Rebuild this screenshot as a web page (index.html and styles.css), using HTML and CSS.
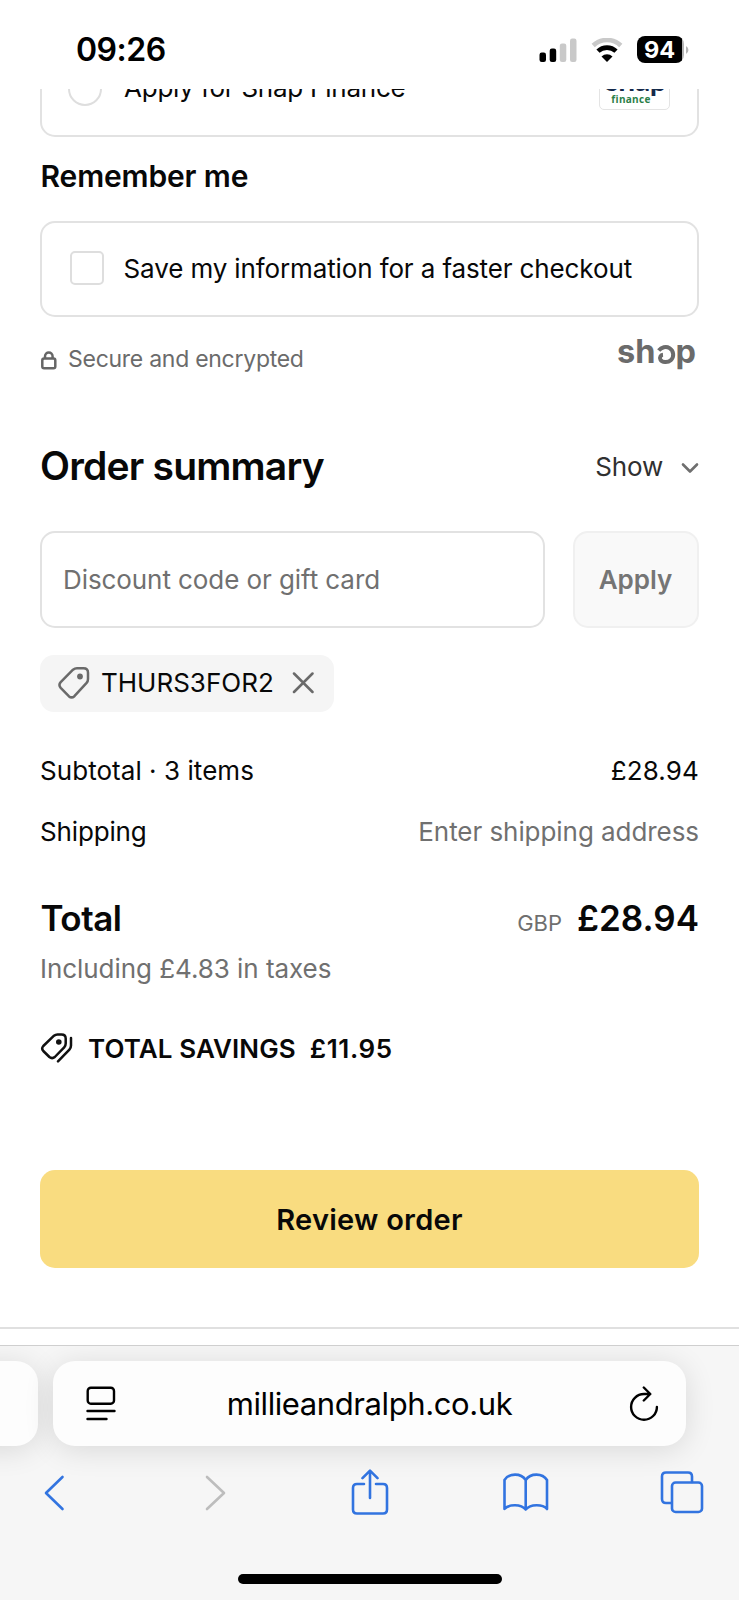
FILE: index.html
```html
<!DOCTYPE html>
<html lang="en">
<head>
<meta charset="utf-8">
<title>Checkout</title>
<link rel="stylesheet" href="styles.css">
</head>
<body>
<div class="phone">
  <header class="status">
    <span class="time">09:26</span>
    <div class="status-icons">
      <svg class="signal" width="38" height="24" viewBox="0 0 38 24"><rect x="0.500" y="14.500" width="6.500" height="9.500" rx="2.200"/><rect x="10.700" y="10.500" width="6.500" height="13.500" rx="2.200"/><rect x="20.800" y="5.500" width="6.500" height="18.500" rx="2.200" fill="#c9c9c9"/><rect x="31" y="0.500" width="6.500" height="23.500" rx="2.200" fill="#c9c9c9"/></svg>
      <svg class="wifi" width="32" height="24" viewBox="0 0 32 24" fill="none"><path d="M2.200 7.500a20 20 0 0 1 27.600 0" stroke="#c9c9c9" stroke-width="4.600"/><path d="M7 13.200a13 13 0 0 1 18 0" stroke="#000" stroke-width="4.600"/><path d="M16 24l-5.500-5.500a8 8 0 0 1 11 0z" fill="#000"/></svg>
      <div class="battery"><span class="level">94</span><svg width="5" height="8" viewBox="0 0 5 8"><path d="M1 0a4.500 4.500 0 0 1 0 8z" fill="#b5b5b5"/></svg></div>
    </div>
  </header>

  <main class="page">
    <div class="clip">
      <div class="panel snap-row">
        <span class="radio"></span>
        <span class="t snap-text">Apply for Snap Finance</span>
        <div class="snap-logo"><span class="snap-word">snap</span><span class="snap-sub">finance</span></div>
      </div>
    </div>

    <h2 class="remember"><span class="t">Remember me</span></h2>
    <label class="panel save-row"><span class="check"></span><span class="t save-text">Save my information for a faster checkout</span></label>
    <div class="secure">
      <svg width="17" height="19" viewBox="0 0 17 19" fill="none" stroke="#666" stroke-width="2.500"><rect x="2.300" y="7.600" width="13" height="9.600" rx="1.800"/><path d="M5 7.600V5.400a3.800 3.800 0 0 1 7.600 0v2.200"/></svg>
      <span class="t secure-text">Secure and encrypted</span>
      <span class="shop" aria-label="shop"><span>sh</span><svg width="19" height="21" viewBox="0 0 20 22" fill="none" stroke="#6b6b6b" stroke-width="4.200"><path d="M1.800 6.900C4.600 3.400 9.500 2 13.200 4.300c4.600 2.800 5.100 9.300 1.300 12.700-3.200 2.900-9.300 2.500-10.900-.7-1.100-2.400.2-4.800 2.700-5"/></svg><span>p</span></span>
    </div>

    <div class="summary-head">
      <h1 class="summary-title"><span class="t">Order summary</span></h1>
      <span class="t show">Show</span>
      <svg width="18" height="12" viewBox="0 0 18 12" fill="none" stroke="#6f6f6f" stroke-width="2.600" stroke-linecap="round" stroke-linejoin="round"><path d="M2 2.500l7 7 7-7"/></svg>
    </div>

    <div class="discount">
      <div class="field"><span class="t field-text">Discount code or gift card</span></div>
      <div class="apply"><span class="t">Apply</span></div>
    </div>

    <div class="chip">
      <svg class="tag" width="32" height="32" viewBox="0 0 32 32" fill="none" stroke="#6a6a6a" stroke-width="2.500" stroke-linejoin="round"><path d="M15 2.700Q16.800 1.300 19 1.300H25.500Q30 1.300 30 5.800V12Q30 14.300 28.600 15.900L16.400 29.200Q13.600 31.600 10.800 29.200L2.700 20.900Q0.200 18 2.700 15.200Z"/><circle cx="22" cy="9.500" r="2.900" fill="#6a6a6a" stroke="none"/></svg>
      <span class="t code">THURS3FOR2</span>
      <svg class="close" width="22" height="22" viewBox="0 0 22 22" fill="none" stroke="#6a6a6a" stroke-width="2.500" stroke-linecap="round"><path d="M2 1.500l18.500 18.500M20.500 1.500l-18.500 18.500"/></svg>
    </div>

    <div class="line subtotal"><span class="t l1">Subtotal · 3 items</span><span class="t l2">£28.94</span></div>
    <div class="line shipping"><span class="t l3">Shipping</span><span class="t l4">Enter shipping address</span></div>
    <div class="total"><span class="t total-label">Total</span><span class="t gbp">GBP</span><span class="t total-value">£28.94</span></div>
    <div class="taxes"><span class="t">Including £4.83 in taxes</span></div>
    <div class="savings">
      <svg width="33" height="30" viewBox="0 0 33 30" fill="none" stroke="#111" stroke-width="2.500" stroke-linecap="round" stroke-linejoin="round"><path d="M14 2.700Q15.500 1.400 17.500 1.400H21.500Q25.700 1.400 25.700 5.500V10.500Q25.700 12.700 24.200 14.300L14.800 24Q12.100 26.300 9.400 24L3.300 18Q1.100 15.500 3.300 13Z"/><circle cx="18.800" cy="9" r="2.800" fill="#111" stroke="none"/><path d="M31 5V12.500Q31 15 29.400 16.700L18 28.300"/></svg>
      <span class="t sav1">TOTAL SAVINGS</span><span class="t sav2">£11.95</span>
    </div>
    <div class="review"><span class="t">Review order</span></div>
    <div class="rule"></div>
  </main>

  <footer class="browser">
    <div class="tabs">
      <div class="prev-tab"></div>
      <div class="url">
        <svg width="30" height="36" viewBox="0 0 30 36" fill="none" stroke="#000" stroke-width="2.400" stroke-linecap="round"><rect x="1.700" y="1.700" width="26.300" height="16" rx="3.200"/><path d="M1.500 25h27M1.500 33h19"/></svg>
        <span class="t url-text">millieandralph.co.uk</span>
        <svg width="30" height="36" viewBox="0 0 30 36" fill="none" stroke="#000" stroke-width="2.400" stroke-linecap="round" stroke-linejoin="round"><path d="M20.500 8H15A12.900 12.900 0 1 0 27.900 20.900M14.800 1.500l6.500 6.500-6.500 6.500"/></svg>
      </div>
    </div>
    <nav class="tools">
      <svg class="back" width="22" height="36" viewBox="0 0 22 36"><path d="M18.500 2L2 18l16.500 16"/></svg>
      <svg class="fwd" width="22" height="36" viewBox="0 0 22 36"><path d="M2 2l17 16-17 16"/></svg>
      <svg class="share" width="38" height="47" viewBox="0 0 38 47"><path d="M13 15H6Q2 15 2 19V40.500Q2 44.500 6 44.500H32Q36 44.500 36 40.500V19Q36 15 32 15H25M19 29V2M11.500 9.200L19 1.700l7.500 7.500"/></svg>
      <svg class="book" width="46" height="39" viewBox="0 0 46 39"><path d="M22.700 7C18-.2 6-.2 1.500 7V36C6 31 18 31 22.700 36.500C27.500 31 39.500 31 44 36V7C39.500-.2 27.500-.2 22.700 7ZM22.700 7V36.500"/></svg>
      <svg class="pages" width="44" height="43" viewBox="0 0 44 43"><path d="M11 32H6Q2 32 2 28V5.500Q2 1.500 6 1.500H28Q32 1.500 32 5.500V11"/><rect x="12" y="11.500" width="30" height="29.500" rx="3.600"/></svg>
    </nav>
    <div class="home"></div>
  </footer>
</div>
</body>
</html>
```
FILE: styles.css
```css
* { box-sizing: border-box; margin: 0; }
body { background: #fff; font-family: Inter, "Liberation Sans", sans-serif; color: #080808; }
svg { flex: none; display: block; }
h1, h2 { font-weight: 600; }
.phone { width: 739px; height: 1600px; display: flex; flex-direction: column; overflow: hidden; }
.t, .time { white-space: nowrap; }

.status { height: 89px; flex: none; padding: 10px 50px 0 76px; display: flex; align-items: center; justify-content: space-between; color: #000; }
.time { font-size: 32px; font-weight: 600; letter-spacing: -0.5px; }
.status-icons { display: flex; align-items: center; }
.wifi { margin-left: 14px; }
.battery { margin-left: 14px; display: flex; align-items: center; }
.level { width: 47px; height: 27px; border-radius: 8px; background: linear-gradient(90deg, #000 45px, #b5b5b5 45px); color: #fff; font-size: 23.500px; font-weight: 700; line-height: 27px; text-align: center; padding-right: 2px; }
.battery svg { margin-left: 1px; margin-right: -1px; }

.page { height: 1256px; flex: none; padding: 0 40px; display: flex; flex-direction: column; }
.clip { height: 48px; flex: none; overflow: hidden; }
.panel { border: 2px solid #e2e2e2; border-radius: 15px; display: flex; align-items: center; font-size: 26px; }
.snap-row { margin-top: -52px; height: 100px; padding: 0 26px; }
.snap-text { letter-spacing: -0.23px; }
.radio { width: 34px; height: 34px; border: 2px solid #dedede; border-radius: 50%; margin: 3px 22px 0 0; }
.snap-logo { margin: 0 1px 0 auto; width: 71px; height: 46px; border: 1.500px solid #e4e4e4; border-radius: 5px; display: flex; flex-direction: column; align-items: center; }
.snap-word { font: 700 30px/26px Lato, sans-serif; color: #14294b; letter-spacing: -0.3px; margin: 1px 0 0 3px; }
.snap-sub { font: 700 10px/10px "Open Sans", sans-serif; color: #2b8049; letter-spacing: 0.3px; margin: 2px 7px 0 0; }

.remember { height: 78px; font-size: 30px; letter-spacing: -0.15px; line-height: 78px; padding-left: 0.500px; }
.save-row { height: 96px; margin-top: 6px; padding: 0 28px 2px; flex: none; }
.save-text { letter-spacing: -0.12px; }
.check { width: 34px; height: 34px; border: 2px solid #dedede; border-radius: 5px; margin-right: 19.500px; }
.secure { height: 84px; display: flex; align-items: center; color: #6b6b6b; font-size: 23px; }
.secure svg:first-child { margin-top: 3px; }
.secure-text { margin-left: 11px; letter-spacing: -0.27px; }
.shop { margin: -15px 3px 0 auto; display: flex; align-items: flex-end; font: 700 32.500px/40px Inter, sans-serif; color: #6b6b6b; }
.shop svg { margin: 0 0 6.500px 1px; }

.summary-head { height: 130px; display: flex; align-items: center; flex: none; }
.summary-title { font-size: 39px; flex: 1; letter-spacing: -0.8px; padding-bottom: 1px; }
.show { font-size: 26px; color: #303030; margin-right: 18px; letter-spacing: -0.2px; }
.summary-head svg { margin-top: 4px; }
.discount { display: flex; gap: 28px; height: 97px; flex: none; }
.field { width: 505px; border: 2px solid #e2e2e2; border-radius: 15px; display: flex; align-items: center; padding-left: 21px; font-size: 26px; letter-spacing: -0.08px; color: #707070; }
.apply { width: 126px; border: 2px solid #f0f0f0; border-radius: 15px; background: #f9f9f9; display: flex; align-items: center; justify-content: center; font-size: 26px; font-weight: 600; color: #757575; padding-right: 1px; }
.chip { width: 294px; height: 57px; flex: none; margin-top: 27px; border-radius: 14px; background: #f5f5f5; display: flex; align-items: center; padding: 0 0 1px 18px; font-size: 26px; }
.code { margin-left: 11px; flex: 1; padding-bottom: 1px; }
.close { margin-right: 20px; }
.line { display: flex; justify-content: space-between; align-items: center; height: 61px; flex: none; font-size: 26px; padding-bottom: 1px; }
.subtotal { margin-top: 28px; }
.l1 { letter-spacing: 0.05px; }
.l2 { letter-spacing: 0.15px; }
.l3 { letter-spacing: -0.15px; }
.l4 { color: #707070; letter-spacing: -0.06px; }
.total { height: 56px; margin-top: 28px; display: flex; align-items: baseline; line-height: 56px; font-size: 35px; font-weight: 600; flex: none; }
.total-label { letter-spacing: -0.5px; padding-left: 0.500px; }
.gbp { margin-left: auto; font-size: 22px; font-weight: 400; color: #6f6f6f; margin-right: 15px; }
.taxes { height: 46px; line-height: 46px; font-size: 26px; letter-spacing: -0.05px; color: #707070; flex: none; }
.savings { height: 60px; margin-top: 26px; display: flex; align-items: center; font-size: 26px; font-weight: 600; flex: none; }
.sav1 { margin-left: 15px; letter-spacing: 0.1px; }
.sav2 { margin-left: 14px; letter-spacing: 0.6px; }
.review { height: 98px; margin-top: 92px; border-radius: 15px; background: #f9dc80; display: flex; align-items: center; justify-content: center; font-size: 29px; font-weight: 600; letter-spacing: 0.25px; padding-top: 1px; flex: none; }
.rule { height: 2px; margin: 59px -40px 0; background: #e0e0e0; flex: none; }

.browser { height: 255px; flex: none; border-top: 1px solid #cfcfcf; background: #f6f6f6; overflow: hidden; }
.tabs { display: flex; gap: 15px; padding-top: 15px; margin-left: -40px; }
.prev-tab { width: 78px; height: 85px; border-radius: 22px; background: #fdfdfd; box-shadow: 0 4px 30px rgba(0,0,0,.12); }
.url { width: 633px; height: 85px; border-radius: 22px; background: #fdfdfd; box-shadow: 0 4px 30px rgba(0,0,0,.12); display: flex; align-items: center; justify-content: space-between; padding: 0 27px 0 33px; font-size: 31px; color: #000; }
.url-text { letter-spacing: -0.4px; margin-right: 6px; }
.tools { height: 47px; margin-top: 23px; padding: 0 35px 0 44px; display: grid; grid-template-columns: 161px 146px 152px 1fr auto; align-items: center; stroke: #3274e0; stroke-width: 2.600; stroke-linecap: round; stroke-linejoin: round; }
.tools svg { fill: none; }
.tools .fwd { stroke: #bdbdbd; }
.home { width: 264px; height: 10px; border-radius: 5px; background: #000; margin: 58px auto 0; }
```
